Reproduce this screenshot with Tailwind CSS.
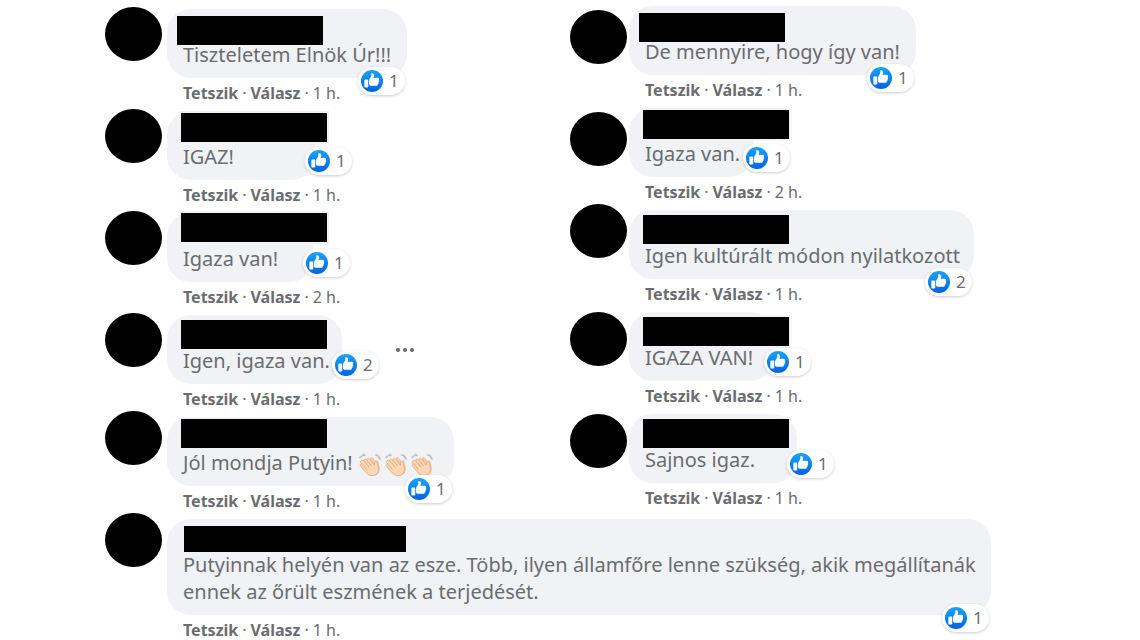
<!DOCTYPE html>
<html lang="hu">
<head>
  <meta charset="UTF-8" />
  <meta name="viewport" content="width=device-width, initial-scale=1.0"/>
  <title>Hozzászólások</title>
  <script src="https://cdn.jsdelivr.net/npm/@tailwindcss/browser@4"></script>
</head>
<body class="bg-white font-['Noto_Sans',sans-serif] text-[#6a6c70]">

  <!-- Icons -->
  <svg class="absolute size-0" aria-hidden="true">
    <defs>
      <linearGradient id="likeBlue" x1="0" y1="0" x2="0" y2="1">
        <stop offset="0" stop-color="#18a4fb"/>
        <stop offset="1" stop-color="#0163e0"/>
      </linearGradient>
    </defs>
    <symbol id="clap" viewBox="0 0 24 24">
      <g fill="none" stroke="#b9bcc0" stroke-width="1.6" stroke-linecap="round">
        <path d="M2 4.500l2.500 -2M5.500 1.500l1.500 1M18 2l2 .8M20.500 3.500l1.500 2.500"/>
      </g>
      <path fill="#f3c9a5" d="M12 4.500c1-1 2.200-.6 3 .6l2.600 3.400c.5-1.500 2.600-1.800 3 .2l1.200 5.800c.6 4-1.600 7.500-5.600 8.300l-4 .5z"/>
      <path fill="#fbd7b5" stroke="#e3a679" stroke-width=".8" d="M3.200 7.600c.9-.9 1.900-.5 2.700.3C5.600 6.300 7.400 5.500 8.600 6.800c.2-1.500 2-1.900 3-.7l4.800 6c.1-1.700-.4-3.400 1-3.700 1.300-.2 1.900.9 2.200 2.400l.8 4.200c.5 3.600-1.600 6.800-5 7.500-3 .6-5.600-.7-7.500-3L2.600 13c-.7-1-.3-2 .7-2.300C2 9.500 2.200 8.400 3.200 7.600z"/>
      <path fill="none" stroke="#e3a679" stroke-width=".9" stroke-linecap="round" d="M5.900 8l5 6M8.600 6.900l4.800 5.800M3.600 10.800l4.600 5.400"/>
    </symbol>
    <symbol id="like" viewBox="0 0 16 16">
      <circle cx="8" cy="8" r="8" fill="url(#likeBlue)"/>
      <path fill="#fff" transform="translate(-1 -1) scale(1.14)" d="M12.162 7.338c.176.123.338.245.338.674 0 .429-.229.604-.474.725.1.163.132.36.089.546-.077.344-.392.611-.672.690.121.194.159.385.015.620-.185.295-.346.407-1.058.407H7.500c-.988 0-1.500-.546-1.500-1V7.665c0-1.230 1.467-2.275 1.467-3.130L7.361 3.470c-.005-.065.008-.224.058-.270.080-.079.301-.200.635-.200.218 0 .363.041.534.123.581.277.732.978.732 1.542 0 .271-.414 1.083-.470 1.364 0 0 .867-.192 1.879-.199 1.061-.006 1.749.190 1.749.842 0 .261-.219.523-.316.666zM3.600 7h1.300a.6.6 0 01.600.600v3.800a.6.6 0 01-.600.600h-1.300a.6.6 0 01-.600-.600V7.600a.6.6 0 01.600-.600z"/>
    </symbol>
  </svg>

  <main class="px-[105px] pt-[6px]">
    <div class="grid grid-cols-2">
      <section id="left" class="pt-[3px]"></section>
      <section id="right"></section>
    </div>
    <section id="bottom"></section>
  </main>

  <script>
    // size = bubble width, face / name = where the blacked out shapes sit
    // out: the reactions hang on the right side of the bubble instead of under it
    const left = [
      { text: 'Tiszteletem Elnök Úr!!!', likes: 1, time: '1 h.', size: 'w-[240px]', face: '-mt-0.5 mr-[5px]', name: 'ml-[10px] pt-[7px]' },
      { text: 'IGAZ!', likes: 1, time: '1 h.', size: 'w-[148px]', face: '-mt-0.5 mr-[5px]', name: 'ml-[14px] pt-[2px]', out: true },
      { text: 'Igaza van!', likes: 1, time: '2 h.', size: 'w-[146px]', face: '-mt-0.5 mr-[5px]', name: 'ml-[14px]', out: true },
      { text: 'Igen, igaza van.', likes: 2, time: '1 h.', size: 'w-[175px]', face: '-mt-0.5 mr-[5px]', name: 'ml-[14px] pt-[5px]', out: true, menu: true },
      { text: 'Jól mondja Putyin!', claps: 3, likes: 1, time: '1 h.', size: 'w-[287px]', face: '-mt-1.5 mr-[5px]', name: 'ml-[14px] pt-[2px]' },
    ];
    const right = [
      { text: 'De mennyire, hogy így van!', likes: 1, time: '1 h.', size: 'w-[287px]', face: 'mt-1 mr-[2px]', name: 'ml-[10px] pt-[7px]' },
      { text: 'Igaza van.', likes: 1, time: '2 h.', size: 'w-[124px]', face: 'mt-1 mr-[2px]', name: 'ml-[14px] pt-[2px]', out: true },
      { text: 'Igen kultúrált módon nyilatkozott', likes: 2, time: '1 h.', size: 'w-[345px]', face: '-mt-1.5 mr-[2px]', name: 'ml-[14px] pt-[5px]' },
      { text: 'IGAZA VAN!', likes: 1, time: '1 h.', size: 'w-[145px]', face: 'mr-[2px]', name: 'ml-[14px] pt-[5px]', out: true },
      { text: 'Sajnos igaz.', likes: 1, time: '1 h.', size: 'w-[168px]', face: 'mr-[2px]', name: 'ml-[14px] pt-[5px]', out: true },
    ];
    const bottom = [
      { text: 'Putyinnak helyén van az esze. Több, ilyen államfőre lenne szükség, akik megállítanák ennek az őrült eszmének a terjedését.', likes: 1, time: '1 h.', size: 'max-w-[824px]', face: '-mt-1.5 mr-[5px]', name: 'ml-[17px] pt-[7px]', wide: true },
    ];

    const clap = '<svg class="inline-block size-6 -my-1 mr-[2px]" role="img" aria-label="taps"><use href="#clap"/></svg>';

    const comment = c => `
      <article class="flex items-start">
        <div class="w-[57px] h-[54px] rounded-[50%] bg-black shrink-0 ${c.face}"></div>
        <div>
          <div class="flex items-center">
            <div class="relative ${c.size} bg-[#f0f2f5] rounded-[24px] pb-[10px]">
              <div class="h-8 ${c.name}">
                <div class="bg-black ring-2 ring-[#f0f2f5] ${c.wide ? 'w-[222px] h-[26px]' : 'w-[146px] h-[29px]'}"></div>
              </div>
              <p class="pl-4 pr-3 text-[20px] leading-[27px] ${c.wide ? '' : 'whitespace-nowrap'}">${c.text}${c.claps ? ' ' + clap.repeat(c.claps) : ''}</p>
              <button class="absolute flex items-center gap-[6px] h-7 w-[47px] pl-[3px] rounded-full bg-white shadow-[0_1px_3px_rgba(0,0,0,0.2)] text-[17px] leading-6 ${c.out ? 'left-full -ml-[10px] bottom-[5px]' : 'right-[2px] -bottom-[17px]'}">
                <svg class="size-[22px] shrink-0" role="img" aria-label="Tetszik"><use href="#like"/></svg>${c.likes}
              </button>
            </div>
            ${c.menu ? `<button class="ml-[54px] flex gap-[3px]" aria-label="Továbbiak">
              <span class="size-1 rounded-full bg-[#65676b]"></span>
              <span class="size-1 rounded-full bg-[#65676b]"></span>
              <span class="size-1 rounded-full bg-[#65676b]"></span>
            </button>` : ''}
          </div>
          <div class="flex gap-1 pl-4 mt-[3px] mb-[6px] text-[16px] leading-6">
            <button class="font-bold">Tetszik</button><span>·</span><button class="font-bold">Válasz</button><span>·</span><a href="#">${c.time}</a>
          </div>
        </div>
      </article>`;

    document.getElementById('left').innerHTML = left.map(comment).join('');
    document.getElementById('right').innerHTML = right.map(comment).join('');
    document.getElementById('bottom').innerHTML = bottom.map(comment).join('');
  </script>

</body>
</html>
